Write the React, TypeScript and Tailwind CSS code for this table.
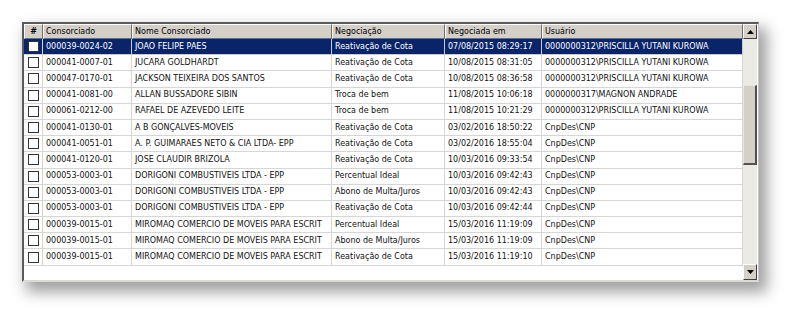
import React from "react";

type Row = [string, string, string, string, string];

const rows: Row[] = [
  ["000039-0024-02", "JOAO FELIPE PAES", "Reativação de Cota", "07/08/2015 08:29:17", "0000000312\\PRISCILLA YUTANI KUROWA"],
  ["000041-0007-01", "JUCARA GOLDHARDT", "Reativação de Cota", "10/08/2015 08:31:05", "0000000312\\PRISCILLA YUTANI KUROWA"],
  ["000047-0170-01", "JACKSON TEIXEIRA DOS SANTOS", "Reativação de Cota", "10/08/2015 08:36:58", "0000000312\\PRISCILLA YUTANI KUROWA"],
  ["000041-0081-00", "ALLAN BUSSADORE SIBIN", "Troca de bem", "11/08/2015 10:06:18", "0000000317\\MAGNON ANDRADE"],
  ["000061-0212-00", "RAFAEL DE AZEVEDO LEITE", "Troca de bem", "11/08/2015 10:21:29", "0000000312\\PRISCILLA YUTANI KUROWA"],
  ["000041-0130-01", "A B GONÇALVES-MOVEIS", "Reativação de Cota", "03/02/2016 18:50:22", "CnpDes\\CNP"],
  ["000041-0051-01", "A. P. GUIMARAES NETO & CIA LTDA- EPP", "Reativação de Cota", "03/02/2016 18:55:04", "CnpDes\\CNP"],
  ["000041-0120-01", "JOSE CLAUDIR BRIZOLA", "Reativação de Cota", "10/03/2016 09:33:54", "CnpDes\\CNP"],
  ["000053-0003-01", "DORIGONI COMBUSTIVEIS LTDA - EPP", "Percentual Ideal", "10/03/2016 09:42:43", "CnpDes\\CNP"],
  ["000053-0003-01", "DORIGONI COMBUSTIVEIS LTDA - EPP", "Abono de Multa/Juros", "10/03/2016 09:42:43", "CnpDes\\CNP"],
  ["000053-0003-01", "DORIGONI COMBUSTIVEIS LTDA - EPP", "Reativação de Cota", "10/03/2016 09:42:44", "CnpDes\\CNP"],
  ["000039-0015-01", "MIROMAQ COMERCIO DE MOVEIS PARA ESCRIT", "Percentual Ideal", "15/03/2016 11:19:09", "CnpDes\\CNP"],
  ["000039-0015-01", "MIROMAQ COMERCIO DE MOVEIS PARA ESCRIT", "Abono de Multa/Juros", "15/03/2016 11:19:09", "CnpDes\\CNP"],
  ["000039-0015-01", "MIROMAQ COMERCIO DE MOVEIS PARA ESCRIT", "Reativação de Cota", "15/03/2016 11:19:10", "CnpDes\\CNP"],
];

const widths = ["w-[89px]", "w-[200px]", "w-[113px]", "w-[97px]", "w-[201px]"];
const headers = ["Consorciado", "Nome Consorciado", "Negociação", "Negociada em", "Usuário"];

function Arrow({ up }: { up: boolean }) {
  return (
    <svg width="7" height="4" viewBox="0 0 7 4" className="block">
      {up ? <polygon points="0,4 7,4 3.5,0" fill="#000" /> : <polygon points="0,0 7,0 3.5,4" fill="#000" />}
    </svg>
  );
}

export default function App() {
  return (
    <div className="w-[803px] h-[322px] bg-white pl-[22px] pt-[22px]" style={{ fontFamily: '"DejaVu Sans", sans-serif' }}>
      <div className="w-[737px] h-[260px] flex border-l-2 border-t-2 border-l-[#5a5a5a] border-t-[#5a5a5a] border-r border-b-2 border-r-[#c8c6c0] border-b-[#dcdad4] bg-white shadow-[6px_8px_14px_2px_rgba(0,0,0,0.38)]">
        <div className="flex flex-col w-[719px]">
          {/* header */}
          <div className="flex h-[15px] bg-[#d4d0c8] text-[8px] leading-none text-black">
            <div className="w-[19px] h-full flex items-center justify-center border-l border-t border-white border-r border-b border-r-[#6e6e6e] border-b-[#6e6e6e] font-bold">
              #
            </div>
            {headers.map((h, i) => (
              <div
                key={h}
                className={`${widths[i]} h-full flex items-center pl-[2px] border-l border-t border-white border-r border-b border-r-[#6e6e6e] border-b-[#6e6e6e] whitespace-nowrap overflow-hidden`}
              >
                {h}
              </div>
            ))}
          </div>
          {/* rows */}
          {rows.map((r, idx) => {
            const sel = idx === 0;
            return (
              <div
                key={idx}
                className={`flex h-[16.2px] text-[8px] leading-none ${sel ? "bg-[#0a246a] text-white" : "bg-white text-[#111]"}`}
              >
                <div className="w-[19px] h-full flex items-center justify-center border-r border-b border-[#d6d6d6]">
                  <div className="w-[11px] h-[11px] bg-white border border-[#333]" />
                </div>
                {r.map((c, i) => (
                  <div
                    key={i}
                    className={`${widths[i]} h-full flex items-center pl-[3px] border-r border-b ${sel ? "border-[#c8c8d8]" : "border-[#d6d6d6]"} whitespace-nowrap overflow-hidden`}
                  >
                    {c}
                  </div>
                ))}
              </div>
            );
          })}
        </div>
        {/* scrollbar */}
        <div className="w-[14px] flex flex-col bg-[#eceae4]">
          <div className="h-[15px] flex items-center justify-center bg-[#d4d0c8] border-l border-t border-white border-r border-b border-r-[#404040] border-b-[#404040]">
            <Arrow up />
          </div>
          <div className="mt-[46px] h-[80px] bg-[#d4d0c8] border-l border-t border-[#e8e6e0] border-r-2 border-b-2 border-r-[#505050] border-b-[#505050]" />
          <div className="flex-1" />
          <div className="h-[16px] flex items-center justify-center bg-[#d4d0c8] border-l border-t border-white border-r border-b border-r-[#404040] border-b-[#404040]">
            <Arrow up={false} />
          </div>
        </div>
      </div>
    </div>
  );
}
